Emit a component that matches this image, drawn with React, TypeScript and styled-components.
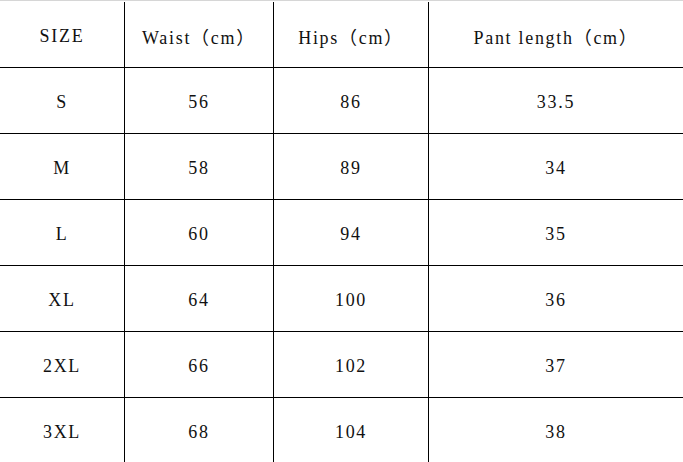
import React from "react";
import styled, { createGlobalStyle } from "styled-components";

const Global = createGlobalStyle`
  html, body { margin: 0; padding: 0; background: #fff; }
  body { width: 683px; height: 462px; overflow: hidden; }
`;

const Sheet = styled.div`
  width: 683px;
  height: 462px;
  box-sizing: border-box;
  border-top: 1px solid #d6d6d6;
  padding-top: 1px;
  background: #fff;
  overflow: hidden;
`;

const Grid = styled.div`
  display: grid;
  grid-template-columns: 125px 149px 155px 1fr;
  grid-template-rows: 66px repeat(5, 66px) 65px;
`;

const Cell = styled.div<{ $lastCol?: boolean; $lastRow?: boolean }>`
  box-sizing: border-box;
  display: flex;
  align-items: center;
  justify-content: center;
  padding-top: 3px;
  border-right: ${(p) => (p.$lastCol ? "none" : "1px solid #000")};
  border-bottom: ${(p) => (p.$lastRow ? "none" : "1px solid #000")};
  font-family: "Liberation Serif", "Noto Sans CJK SC", serif;
  font-size: 18px;
  letter-spacing: 1.7px;
  color: #111;
  white-space: nowrap;
`;

const header = ["SIZE", "Waist（cm）", "Hips（cm）", "Pant length（cm）"];
const rows = [
  ["S", "56", "86", "33.5"],
  ["M", "58", "89", "34"],
  ["L", "60", "94", "35"],
  ["XL", "64", "100", "36"],
  ["2XL", "66", "102", "37"],
  ["3XL", "68", "104", "38"],
];

export default function App() {
  const all = [header, ...rows];
  return (
    <>
      <Global />
      <Sheet>
        <Grid>
          {all.map((r, ri) =>
            r.map((c, ci) => (
              <Cell
                key={`${ri}-${ci}`}
                $lastCol={ci === 3}
                $lastRow={ri === all.length - 1}
              >
                {c}
              </Cell>
            ))
          )}
        </Grid>
      </Sheet>
    </>
  );
}
